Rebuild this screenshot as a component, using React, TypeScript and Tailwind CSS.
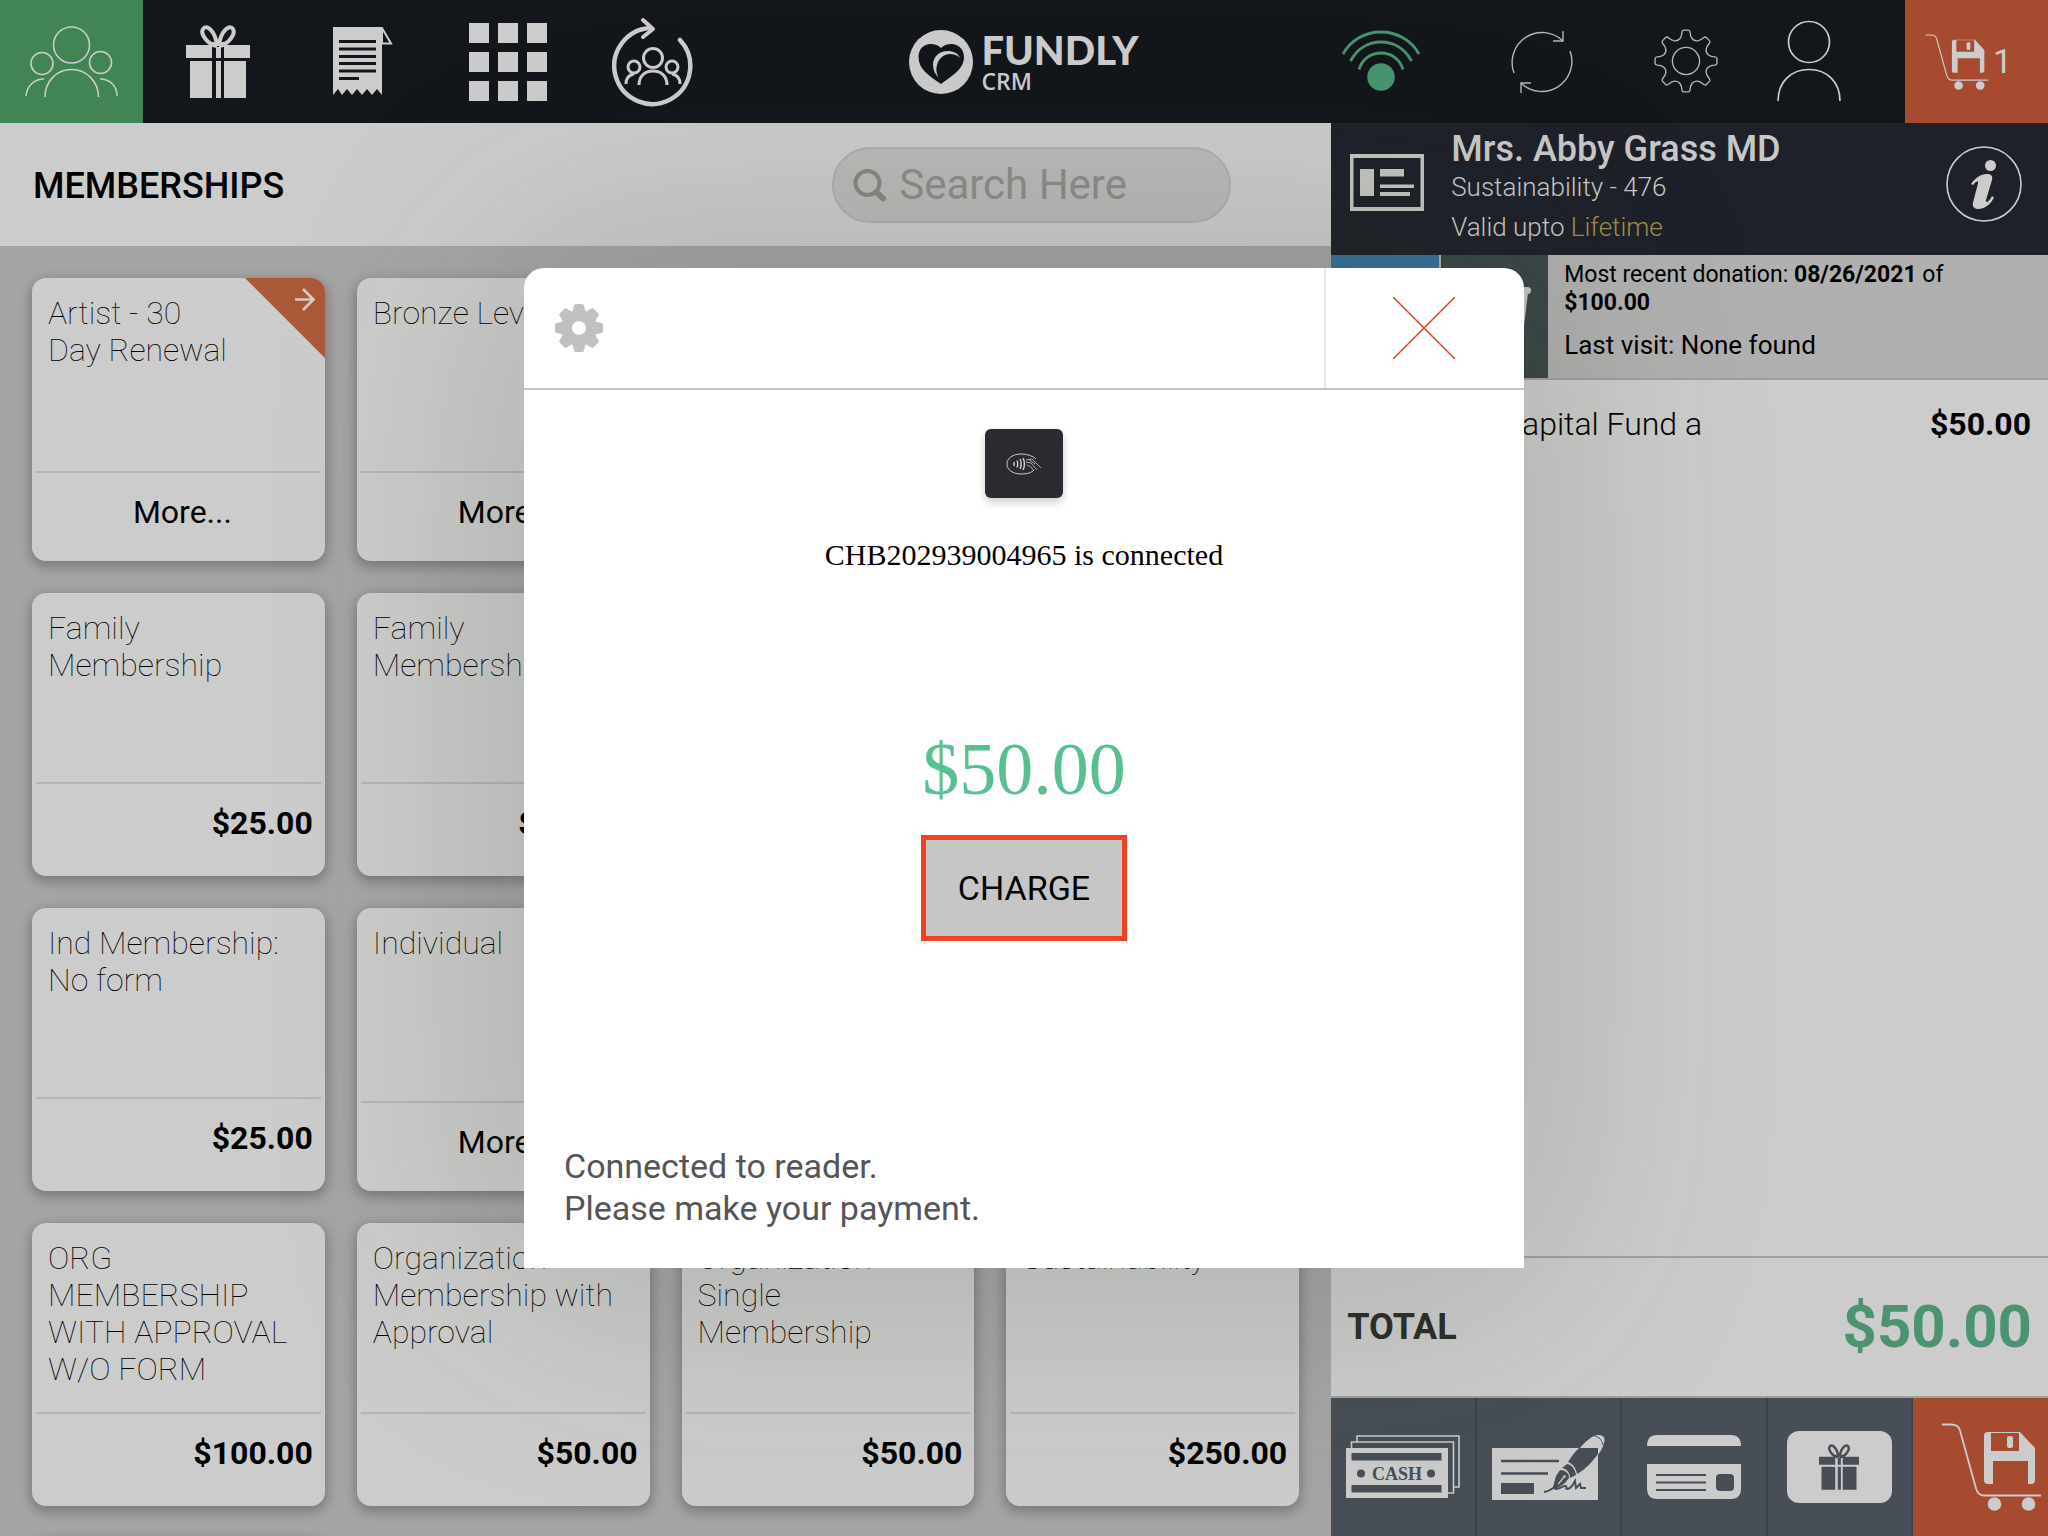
import React from "react";

type Product = { title: string; price?: string; renew?: boolean };

const products: Product[] = [
  { title: "Artist - 30\nDay Renewal", renew: true },
  { title: "Bronze Level" },
  { title: "" },
  { title: "" },
  { title: "Family\nMembership", price: "$25.00" },
  { title: "Family\nMembership", price: "$100.00" },
  { title: "" },
  { title: "" },
  { title: "Ind Membership:\nNo form", price: "$25.00" },
  { title: "Individual" },
  { title: "" },
  { title: "" },
  { title: "ORG\nMEMBERSHIP\nWITH APPROVAL\nW/O FORM", price: "$100.00" },
  { title: "Organization\nMembership with\nApproval", price: "$50.00" },
  { title: "Organization\nSingle\nMembership", price: "$50.00" },
  { title: "Sustainability", price: "$250.00" },
  { title: "" },
];

function GroupIcon() {
  return (
    <svg width="94" height="72" viewBox="0 0 94 72" fill="none" stroke="#ccc" strokeWidth="1.6">
      <ellipse cx="46.500" cy="19" rx="18" ry="18" />
      <circle cx="17" cy="37.500" r="11" />
      <circle cx="75.500" cy="36.500" r="11" />
      <path d="M20 71c0-15 11-27.500 26.500-27.500S73.500 56 73.500 71" />
      <path d="M1 70c1-10 8-17 18-17M75 53c10 0 17 7 17 17" />
    </svg>
  );
}

function GiftIcon({ className, fill }: { className: string; fill: string }) {
  return (
    <svg className={className} viewBox="0 0 64 73" fill={fill}>
      <path d="M0 20h26v13H0zM38 20h26v13H38zM30 22h5v11h-5zM4 36h22v37H4zM38 36h22v37H38zM30 36h5v37h-5z" />
      <g fill="none" stroke={fill} strokeWidth="4">
        <path d="M31 21C22 20 14 9 17 4c3-5 12 1 14 16" />
        <path d="M33 21c9-1 17-12 14-17-3-5-12 1-14 16" />
      </g>
      <path d="M24 17h16v4H24z" />
    </svg>
  );
}

function ReceiptIcon() {
  return (
    <svg width="60" height="70" viewBox="0 0 60 70">
      <path fill="#ccc" d="M0 0h49v68l-5-6-5 6-5-6-5 6-5-6-5 6-5-6-5 6-4-6-5 6z" />
      <path d="M49 1l9 15.500h-9z" fill="none" stroke="#ccc" strokeWidth="2" />
      <path d="M6 14.500h37M6 22h37M6 29.500h37M6 36.500h37M6 44h37M6 51.500h20" stroke="#13161b" strokeWidth="3.200" />
    </svg>
  );
}

function GridIcon() {
  const steps = [0, 29, 58];
  return (
    <svg width="78" height="78" viewBox="0 0 78 78" fill="#ccc">
      {steps.map((y) => steps.map((x) => <rect key={`${x}-${y}`} x={x} y={y} width="20" height="20" />))}
    </svg>
  );
}

function CycleIcon() {
  return (
    <svg width="82" height="90" viewBox="0 0 82 90" fill="none" stroke="#ccc">
      <path d="M68 23a38 38 0 1 1-29-12" strokeWidth="4.500" strokeLinecap="round" />
      <path d="M31 3l10 9-10 8" strokeWidth="4" strokeLinecap="round" strokeLinejoin="round" />
      <g strokeWidth="3">
        <circle cx="41" cy="41" r="9.500" />
        <circle cx="22" cy="50" r="6" />
        <circle cx="60" cy="50" r="6" />
        <path d="M27 68c0-9 6-14 14-14s14 5 14 14" />
        <path d="M14 67c0-5 2-9 8-10M68 67c0-5-2-9-8-10" />
      </g>
    </svg>
  );
}

function HeartMark() {
  return (
    <svg width="64" height="64" viewBox="0 0 64 64">
      <circle cx="32" cy="32" r="32" fill="#ccc" />
      <path fill="#13161b" d="M32 54C20 46 9.500 39 9.500 27 9.500 19 15 14 21.500 14c4.500 0 8 1.500 10.500 4 2.500-2.500 6-4 10.500-4C49 14 55 19 55 27c0 12-12 19-23 27z" />
      <path fill="#ccc" d="M51 28c-2-5-7-7-12-7-9 0-15 6-15 14 0 5 2 9 6 13-3-5-3-9-2-13 2-7 7-11 13-11 4 0 7 1 10 4z" />
    </svg>
  );
}

function WifiIcon() {
  return (
    <svg width="78" height="62" viewBox="0 0 78 62">
      <circle cx="39" cy="47" r="13.800" fill="#45966f" />
      <g fill="none" stroke="#45966f" strokeWidth="2.800">
        <path d="M1 24C9 10 23 2 39 2s30 8 38 22" />
        <path d="M8.500 31C15 19 26 12 39 12s24 7 30.500 19" />
        <path d="M17 39.500C20 29 29 23 39 23s19 6 22 16.500" />
      </g>
    </svg>
  );
}

function SyncIcon() {
  return (
    <svg width="64" height="64" viewBox="0 0 64 64" fill="none" stroke="#b5b5b5" strokeWidth="1.400">
      <path d="M4 43A30 30 0 0 1 53 11M60 21A30 30 0 0 1 11 53" />
      <path d="M53 1v10H43M11 63V53h10" />
    </svg>
  );
}

function gearOutline(c: number, outer: number, inner: number) {
  const parts: string[] = [];
  for (let i = 0; i < 8; i++) {
    const base = (i * Math.PI) / 4 - Math.PI / 2;
    const at = (r: number, d: number) =>
      `${(c + r * Math.cos(base + d)).toFixed(2)} ${(c + r * Math.sin(base + d)).toFixed(2)}`;
    parts.push(`${i ? "L" : "M"}${at(inner, -0.26)}Q${at(inner + 2, -0.17)} ${at(outer - 2, -0.14)}Q${at(outer, -0.12)} ${at(outer, -0.08)}`);
    parts.push(`L${at(outer, 0.08)}Q${at(outer, 0.12)} ${at(outer - 2, 0.14)}Q${at(inner + 2, 0.17)} ${at(inner, 0.26)}`);
    parts.push(`Q${at(inner - 2, 0.39)} ${at(inner, 0.525)}`);
  }
  return parts.join("") + "Z";
}

function OutlineGear() {
  return (
    <svg width="64" height="64" viewBox="0 0 66 66" fill="none" stroke="#b5b5b5" strokeWidth="1.400">
      <path d={gearOutline(33, 32, 24)} />
      <circle cx="33" cy="33" r="14" />
    </svg>
  );
}

function SolidGear() {
  return (
    <svg width="48" height="48" viewBox="0 0 48 48" fill="#c0c0c0">
      <circle cx="24" cy="24" r="12.500" fill="none" stroke="#c0c0c0" strokeWidth="11" />
      {[0, 45, 90, 135].map((a) => (
        <path
          key={a}
          transform={`rotate(${a} 24 24)`}
          d="M17 10l2-8.500Q19.300 0 21 0h6q1.700 0 2 1.500L31 10zM17 38l2 8.500q.3 1.500 2 1.500h6q1.700 0 2-1.500L31 38z"
        />
      ))}
    </svg>
  );
}

function UserIcon() {
  return (
    <svg width="66" height="82" viewBox="0 0 66 82" fill="none" stroke="#ccc" strokeWidth="1.700">
      <circle cx="33" cy="22" r="20.500" />
      <path d="M2 81c0-19 13-31.500 31-31.500S64 62 64 81" />
    </svg>
  );
}

function SaveCartIcon({ className }: { className: string }) {
  return (
    <svg className={className} viewBox="0 0 100 88" fill="#ccc">
      <path d="M0 1.500h9c5 0 8 2 9 6l16 58c1.500 5 4 7 8 7h57" fill="none" stroke="#ccc" strokeWidth="1.800" />
      <circle cx="52.500" cy="81" r="6.800" />
      <circle cx="86.500" cy="81" r="6.800" />
      <path
        fillRule="evenodd"
        d="M46 9h32l15 16v32q0 4-4 4h-3V38H51v23h-5q-4 0-4-4V13q0-4 4-4zM49 10v18h28V10zM65 15q0-2 3-2t3 2v8q0 2-3 2t-3-2z"
      />
    </svg>
  );
}

function IdCardIcon() {
  return (
    <svg className="mt-[31px]" width="74" height="57" viewBox="0 0 74 57" fill="#c4c4c1">
      <path fillRule="evenodd" d="M0 0h74v57H0zM3.500 4v49h67V4z" />
      <path d="M10 15h14v27H10zM30 15h24v7.500H30zM30 30.500h34V34H30zM30 38h30v4H30z" />
    </svg>
  );
}

function InfoIcon() {
  return (
    <svg width="76" height="76" viewBox="0 0 76 76">
      <circle cx="38" cy="38" r="37" fill="none" stroke="#ccc" strokeWidth="1.600" />
      <circle cx="44.500" cy="19.500" r="5.500" fill="#ccc" />
      <path
        fill="#ccc"
        d="M25 38c4-6 10-10 16-10 4 0 6 2 5 6l-6 20c-.6 2 .8 2.500 2.200 1.300 1.500-1.300 2.800-3 3.800-5l2 1C45 58 39 63 32.500 63c-4.500 0-6.500-2.500-5.500-6.500l5-19c.6-2.200-1-2.500-2.500-1.200L27 39z"
      />
    </svg>
  );
}

function CupIcon() {
  return (
    <svg width="72" height="70" viewBox="0 0 72 70" fill="#c4c4c1">
      <rect x="0" y="5" width="72" height="7" rx="3.500" />
      <path d="M3 11h66l-7 57H10z" />
    </svg>
  );
}

function CashIcon() {
  return (
    <svg width="114" height="88" viewBox="0 0 114 88">
      <g fill="#474e55" stroke="#ccc" strokeWidth="1.600">
        <path d="M11 1h102v51H11z" />
        <path d="M5.500 7h102v51h-102z" />
      </g>
      <path fill="#ccc" d="M0 13h102v50H0z" />
      <path fill="#474e55" d="M5.500 18h90v7.500h-90zM5.500 50h90v7.500h-90z" />
      <circle cx="15" cy="38.500" r="4" fill="#474e55" />
      <circle cx="85" cy="38.500" r="4" fill="#474e55" />
      <text x="51" y="45" textAnchor="middle" fontFamily="Liberation Serif, serif" fontWeight="700" fontSize="18" fill="#474e55">
        CASH
      </text>
    </svg>
  );
}

function CheckIcon() {
  return (
    <svg width="114" height="88" viewBox="0 0 114 88">
      <path fill="#ccc" d="M1 13h106v52H1z" />
      <path d="M10 26h58M10 38.500h47" stroke="#474e55" strokeWidth="2.400" />
      <path fill="#474e55" d="M10 48h33v11H10z" />
      <path fill="#ccc" d="M88 14C94 7 99 2 106 0c6-1 9 3 7 8-1 4-3 8-6 12V14z" />
      <path d="M104 1c4 1 7 4 8 9" fill="none" stroke="#474e55" strokeWidth="1" />
      <path fill="#474e55" d="M77 27c3-5 6-9 11-14h19v6C101 27 95 34 86 39c-1-6-4-10-9-12z" />
      <path fill="#474e55" d="M76 29c5 1 8 5 9 11l-6 3c0-5-3-9-8-10z" />
      <path fill="#474e55" d="M69 35c5 0 9 3 9 8l-4 5-9 6-3-2 3-11z" />
      <path d="M64 53l9-11" stroke="#ccc" strokeWidth="1.200" />
      <circle cx="73.500" cy="41.500" r="1.200" fill="#ccc" />
      <path d="M53 57c7-1 12-6 14-8-2 4-4 5-2 5 4 0 6-3 9-3s0 3 2 3c3 0 6-4 8-8l1 7 4-4 1 4h5" fill="none" stroke="#474e55" strokeWidth="2" />
    </svg>
  );
}

function CreditCardIcon() {
  return (
    <svg width="94" height="64" viewBox="0 0 94 64">
      <path fill="#ccc" d="M0 11Q0 0 10 0h74q10 0 10 11zM0 29h94v24q0 11-10 11H10Q0 64 0 53z" />
      <path d="M9 40h50M9 47.500h50M9 55h50" stroke="#474e55" strokeWidth="2.200" />
      <rect x="69" y="39" width="18" height="17" rx="4" fill="#474e55" />
    </svg>
  );
}

function ContactlessIcon() {
  return (
    <svg width="36" height="22" viewBox="0 0 36 22" fill="none" stroke="#c9c9cc">
      <path d="M30 6C27 3 21 1 15 1 7 1 1 5 1 11s6 10 14 10c6 0 10-1 13-4" strokeWidth="1" />
      <path d="M8 9v4M11 7.500q1.500 3.500 0 7M14 6q2.500 5 0 10M17 5q3 6 0 12" strokeWidth="1.500" />
      <path d="M20 7l6-1 9 9M20 9l5 1 6 7M21 12l4 2 3 4M22 6l7 5" strokeWidth="0.800" />
    </svg>
  );
}

function ProductCard({ title, price, renew }: Product) {
  const blank = title === "";
  return (
    <button
      type="button"
      aria-label={blank ? "Membership" : undefined}
      className="relative flex h-[283px] flex-col rounded-[14px] bg-[#ccc] px-1 text-left shadow-[0_4px_12px_2px_rgba(0,0,0,0.26)]"
    >
      <span className="w-full flex-1 whitespace-pre px-3 pt-[17px] text-[32px]/[37px] font-thin text-black">{title}</span>
      {price && (
        <span className="flex h-[94px] w-full justify-end border-t-2 border-[#b4b4b4] pt-5 pr-2 text-[32px]/[38px] font-bold">
          {price}
        </span>
      )}
      {!price && !blank && (
        <span className="flex h-[90px] w-full justify-center border-t-2 border-[#b4b4b4] pt-5 pl-2 text-[32px]/[38px]">
          More...
        </span>
      )}
      {renew && (
        <svg className="absolute top-0 right-0 rounded-tr-[14px]" width="80" height="80" viewBox="0 0 80 80">
          <path d="M0 0h80v80z" fill="#aa5a39" />
          <path d="M50 21.500h19M58 11l10.500 10.500L58 32" fill="none" stroke="#d5cdc8" strokeWidth="2.600" />
        </svg>
      )}
    </button>
  );
}

function Header() {
  const tab = "flex w-[143px] items-center justify-center pl-0.5";
  return (
    <header className="flex h-[123px] shrink-0 bg-[#13161b]">
      <nav className="flex flex-1 gap-[2px]">
        <button type="button" aria-label="Members" className="flex w-[143px] items-center justify-center bg-[#428554]"><GroupIcon /></button>
        <button type="button" aria-label="Gifts" className={tab}><GiftIcon className="h-[73px] w-[64px]" fill="#ccc" /></button>
        <button type="button" aria-label="Receipts" className={tab}><ReceiptIcon /></button>
        <button type="button" aria-label="Catalog" className={tab}><GridIcon /></button>
        <button type="button" aria-label="Renewals" className={tab}><CycleIcon /></button>
      </nav>
      <div className="flex items-center gap-2 text-[#ccc]">
        <HeartMark />
        <div className="flex flex-col">
          <span className="font-[Lato] text-[40px]/[38px] font-black">FUNDLY</span>
          <span className="font-['Open_Sans'] text-[23px]/[24px] font-semibold">CRM</span>
        </div>
      </div>
      <div className="flex flex-1 justify-end">
        <button type="button" aria-label="Network" className="flex w-[174px] items-center justify-center pr-0.5 pb-0.5"><WifiIcon /></button>
        <button type="button" aria-label="Sync" className="flex w-[145px] items-center justify-center"><SyncIcon /></button>
        <button type="button" aria-label="Settings" className="flex w-[145px] items-center justify-center pr-0.5 pb-0.5"><OutlineGear /></button>
        <button type="button" aria-label="Account" className="mr-[46px] flex w-[100px] items-center justify-center pb-0.5"><UserIcon /></button>
        <button type="button" aria-label="Saved carts" className="flex w-[143px] items-center gap-1 bg-[#a64a30] pl-5 text-[#ccc]">
          <SaveCartIcon className="h-[56px] w-[64px]" />
          <span className="text-[34px]">1</span>
        </button>
      </div>
    </header>
  );
}

function Catalog() {
  return (
    <main className="flex min-w-0 flex-1 flex-col bg-[#a5a5a5]">
      <div className="flex h-[123px] shrink-0 items-center justify-between bg-[#ccc] pr-[100px] pl-[33px]">
        <h1 className="pt-0.5 text-[36px] font-medium">MEMBERSHIPS</h1>
        <label className="flex h-[76px] w-[399px] items-center gap-3 rounded-full border-2 border-[#aeafae] bg-[#bababa] pl-[19px]">
          <svg width="34" height="34" viewBox="0 0 34 34" fill="none" stroke="#868783" strokeLinecap="round">
            <circle cx="14.500" cy="15" r="12" strokeWidth="4" />
            <path d="M24 24.500l6 6" strokeWidth="6" />
          </svg>
          <input
            type="text"
            aria-label="Search"
            placeholder="Search Here"
            className="w-[280px] bg-transparent text-[42px] outline-none placeholder:text-[#8b8d8b]"
          />
        </label>
      </div>
      <div className="grid grid-cols-4 gap-8 p-8">
        {products.map((p, i) => (
          <ProductCard key={i} {...p} />
        ))}
      </div>
    </main>
  );
}

function CartPanel() {
  const pay = "flex flex-1 items-center justify-center border-r-2 border-[#3b4349]";
  return (
    <aside className="flex w-[35%] flex-col bg-[#ccc]">
      <section className="flex h-[132px] shrink-0 items-start bg-[#1e212a] pr-[26px] pl-[19px] text-[#c8c8c8]">
        <IdCardIcon />
        <div className="ml-[27px] flex-1 pt-[5px]">
          <h2 className="text-[36px]/[42px] font-medium">Mrs. Abby Grass MD</h2>
          <p className="mt-0.5 text-[26px]/[30px] font-light">Sustainability - 476</p>
          <p className="mt-2.5 text-[26px]/[30px] font-light">
            Valid upto <span className="text-[#a08f4d]">Lifetime</span>
          </p>
        </div>
        <button type="button" aria-label="Member details" className="mt-[23px]"><InfoIcon /></button>
      </section>
      <section className="flex h-[125px] shrink-0 border-b-2 border-[#9f9f9f] bg-[#b0b0b0]">
        <div className="mr-0.5 w-[108px] bg-[#376f9a]" />
        <div className="flex w-[107px] items-center justify-center bg-[#3b4547]"><CupIcon /></div>
        <div className="flex-1 px-4 pt-1.5">
          <p className="w-[400px] text-[23px]/[28px]">
            Most recent donation: <b>08/26/2021</b> of <b>$100.00</b>
          </p>
          <p className="mt-[13px] text-[26px]/[30px]">Last visit: None found</p>
        </div>
      </section>
      <ul className="flex-1">
        <li className="flex justify-between pt-[25px] pr-[17px] pl-[170px] text-[32px]/[38px]">
          <span className="font-light">Capital Fund a</span>
          <span className="font-bold">$50.00</span>
        </li>
      </ul>
      <section className="flex h-[142px] shrink-0 items-center justify-between border-y-2 border-[#9f9f9f] pr-4 pl-4">
        <span className="text-[36px] font-bold text-[#2c2e2a]">TOTAL</span>
        <span className="text-[60px] font-bold text-[#4c9370]">$50.00</span>
      </section>
      <section className="flex h-[138px] shrink-0 bg-[#474e55]">
        <button type="button" aria-label="Pay with cash" className="flex flex-1 items-center justify-center border-r-2 border-[#3b4349] pt-6"><CashIcon /></button>
        <button type="button" aria-label="Pay with check" className="flex flex-1 items-center justify-center border-r-2 border-[#3b4349] pt-6"><CheckIcon /></button>
        <button type="button" aria-label="Pay with card" className={pay}><CreditCardIcon /></button>
        <button type="button" aria-label="Pay with gift card" className={pay}>
          <span className="flex h-[72px] w-[105px] items-center justify-center rounded-[12px] bg-[#ccc]">
            <GiftIcon className="h-[46px] w-[40px]" fill="#474e55" />
          </span>
        </button>
        <button type="button" aria-label="Save cart" className="flex w-[135px] items-center justify-end bg-[#a64a30] pr-[6px]">
          <SaveCartIcon className="h-[88px] w-[100px]" />
        </button>
      </section>
    </aside>
  );
}

function PaymentDialog() {
  return (
    <div className="absolute inset-0 flex items-center justify-center">
      <section
        role="dialog"
        aria-label="Card payment"
        className="flex h-[1000px] w-[1000px] flex-col rounded-t-[20px] bg-white shadow-[0_0_240px_20px_rgba(45,58,30,0.2)]"
      >
        <div className="flex h-[122px] justify-between border-b-2 border-[#c4c4c4]">
          <button type="button" aria-label="Reader settings" className="pl-[31px]"><SolidGear /></button>
          <button type="button" aria-label="Close" className="flex w-[200px] items-center justify-center border-l-2 border-[#e6e6e6] pr-0.5">
            <svg width="62" height="62" viewBox="0 0 62 62" stroke="#f0392b" strokeWidth="1.500">
              <path d="M0 0l62 62M62 0L0 62" />
            </svg>
          </button>
        </div>
        <div className="flex flex-1 flex-col items-center pt-[39px]">
          <div className="flex h-[69px] w-[78px] items-center justify-center rounded-md bg-[#2b2a30] shadow-[0_4px_8px_rgba(0,0,0,0.2)]">
            <ContactlessIcon />
          </div>
          <p className="mt-[40px] font-['Liberation_Serif',serif] text-[30px]/[34px]">CHB202939004965 is connected</p>
          <p className="mt-[155px] font-['Liberation_Serif',serif] text-[74px]/[84px] text-[#57c08f]">$50.00</p>
          <button type="button" className="mt-[24px] h-[106px] w-[206px] border-[5px] border-[#ed4326] bg-[#c6c6c6] text-[34px]">
            CHARGE
          </button>
          <p className="mt-auto mb-[39px] w-full px-10 text-[34px]/[42px] text-[#555]">
            Connected to reader.
            <br />
            Please make your payment.
          </p>
        </div>
      </section>
    </div>
  );
}

export default function App() {
  return (
    <div className="relative flex h-screen flex-col overflow-hidden font-[Roboto,sans-serif] text-black">
      <Header />
      <div className="flex min-h-0 flex-1">
        <Catalog />
        <CartPanel />
      </div>
      <PaymentDialog />
    </div>
  );
}
